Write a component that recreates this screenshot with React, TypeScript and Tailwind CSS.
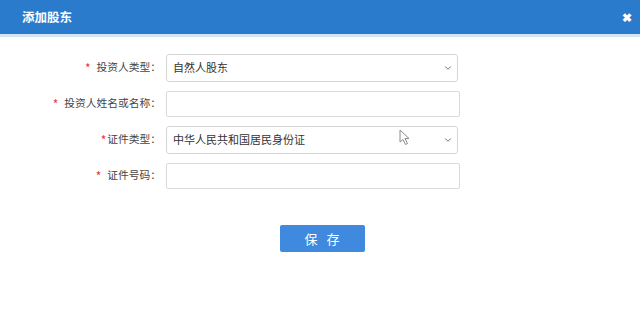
import { ChevronDown } from "lucide-react";

interface Row {
  label: string;
  star: string;
  kind: "select" | "input";
  value?: string;
}

const rows: Row[] = [
  { label: "投资人类型：", star: "*", kind: "select", value: "自然人股东" },
  { label: "投资人姓名或名称：", star: "*", kind: "input" },
  { label: "证件类型：", star: "*", kind: "select", value: "中华人民共和国居民身份证" },
  { label: "证件号码：", star: "*", kind: "input" },
];

function Cursor() {
  return (
    <svg
      className="pointer-events-none absolute left-[399px] top-[129px]"
      width="12"
      height="17"
      viewBox="0 0 12 17"
    >
      <path
        d="M1 1 L1 13 L4 10.5 L6.5 15.5 L8.5 14.5 L6 9.5 L10 9.5 Z"
        fill="#ffffff"
        stroke="#8a8a8a"
        strokeWidth="1"
        strokeLinejoin="round"
      />
    </svg>
  );
}

export default function App() {
  return (
    <div
      className="relative h-[317px] w-[640px] overflow-hidden bg-white"
      style={{ fontFamily: '"Noto Sans CJK SC", "Noto Sans", sans-serif' }}
    >
      <div className="flex h-[37px] items-center justify-between border-b-[3px] border-[#cfe6f7] bg-[#2b7bcc] pl-[22px] pr-[8px]">
        <span className="text-[12.5px] font-bold text-white">添加股东</span>
        <span className="text-[12px] font-bold leading-none text-white">✖</span>
      </div>

      <div className="flex flex-col gap-[9px] pt-[17px]">
        {rows.map((row, i) => (
          <div key={row.label} className="flex h-[27px] items-center">
            <div className="flex w-[161px] items-center justify-end text-[10.75px] text-[#444]">
              <span className={`text-[12px] text-[#e0393e] ${i === 2 ? "mr-[1px]" : "mr-[6px]"}`}>
                {row.star}
              </span>
              {row.label}
            </div>
            <div className="ml-[5px]">
              {row.kind === "select" ? (
                <div className="flex h-[28px] w-[292px] items-center justify-between rounded-[3px] border border-[#d6d6d6] bg-white pl-[6px] pr-[4px] text-[11px] text-[#333]">
                  <span>{row.value}</span>
                  <ChevronDown size={10} strokeWidth={2} className="text-[#555]" />
                </div>
              ) : (
                <div className="h-[26px] w-[294px] rounded-[2px] border border-[#d9d9d9] bg-white" />
              )}
            </div>
          </div>
        ))}
      </div>

      <div className="flex justify-center pl-[5px] pt-[36px]">
        <button
          type="button"
          className="h-[27px] w-[85px] rounded-[2px] bg-[#3f8ade] pl-[2px] text-[13px] tracking-[3px] text-white"
        >
          保 存
        </button>
      </div>

      <Cursor />
    </div>
  );
}
